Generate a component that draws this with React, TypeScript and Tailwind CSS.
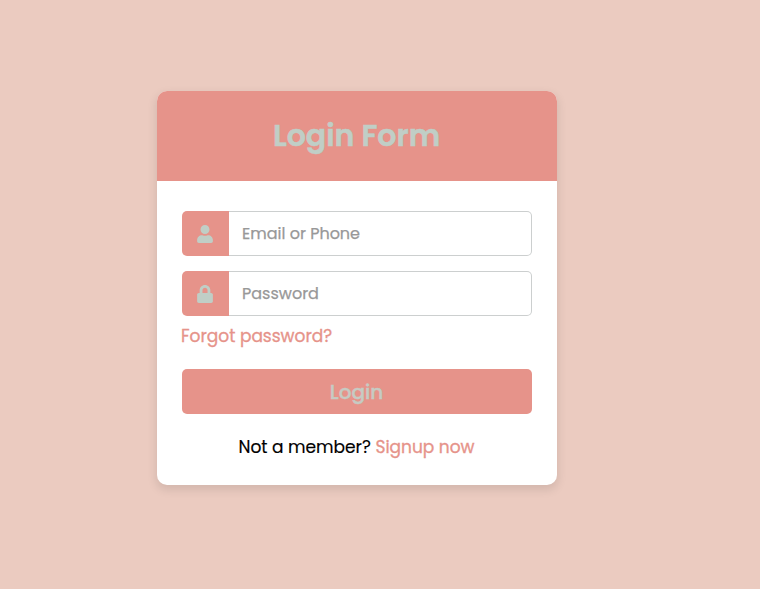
import { FaUser, FaLock } from "react-icons/fa";
import type { ReactNode } from "react";

function Field({ icon, type, placeholder }: { icon: ReactNode; type: string; placeholder: string }) {
  return (
    <label className="flex h-[45px] w-full">
      <span className="flex w-[47px] items-center justify-center rounded-l-[5px] bg-[#e6938a] pr-px pt-px text-[18px] text-[#c0cec6]">
        {icon}
      </span>
      <input
        type={type}
        placeholder={placeholder}
        className="min-w-0 flex-1 rounded-r-[5px] border border-l-0 border-[#cccfcf] bg-white pt-px pl-[13px] text-[16px] outline-none [-webkit-text-stroke:0.25px] placeholder:text-[#989898]"
      />
    </label>
  );
}

export default function App() {
  return (
    <div className="h-[589px] w-[760px] bg-[#ebcbc0] pt-[91px] pl-[157px] font-['Poppins','Inter','Open_Sans',sans-serif]">
      <div className="h-[394px] w-[400px] overflow-hidden rounded-[10px] bg-white shadow-[0_4px_10px_1px_rgba(0,0,0,0.1)]">
        <h1 className="flex h-[90px] items-center justify-center bg-[#e6938a] pr-px pb-[2px] text-[30px] font-semibold text-[#c0cec6] [-webkit-text-stroke:0.5px]">
          Login Form
        </h1>
        <form className="flex flex-col px-[25px] pt-[30px]">
          <div className="flex flex-col gap-[15px]">
            <Field icon={<FaUser />} type="text" placeholder="Email or Phone" />
            <Field icon={<FaLock />} type="password" placeholder="Password" />
          </div>
          <a className="mt-2 -ml-px h-6 self-start text-[17px] leading-6 text-[#e6938a] [-webkit-text-stroke:0.3px]">Forgot password?</a>
          <button type="button" className="mt-[21px] h-[45px] rounded-[5px] bg-[#e6938a] pr-px text-[20px] font-medium text-[#c6cbc3] [-webkit-text-stroke:0.4px]">
            Login
          </button>
          <p className="mt-[21px] pr-px text-center text-[17px] leading-6 text-black [-webkit-text-stroke:0.15px]">
            Not a member? <a className="text-[#e6938a] [-webkit-text-stroke:0.3px]">Signup now</a>
          </p>
        </form>
      </div>
    </div>
  );
}
